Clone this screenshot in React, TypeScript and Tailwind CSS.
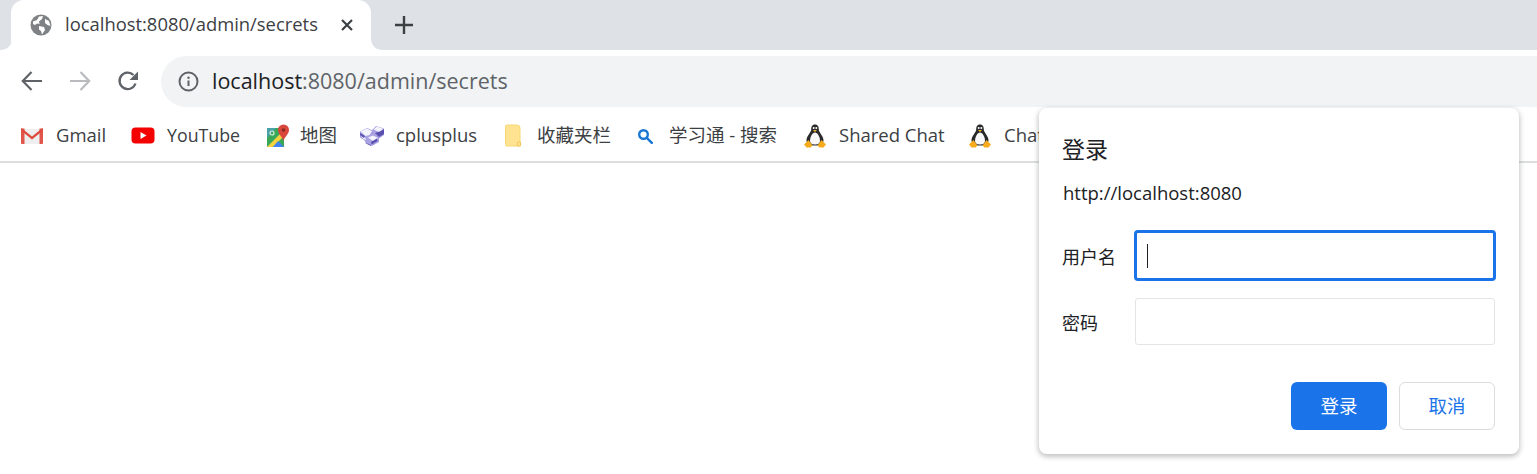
import React from "react";

const UI = "font-['Open_Sans','Noto_Sans_CJK_SC',sans-serif]";

function Flare({ side }: { side: "l" | "r" }) {
  return (
    <svg width="12" height="12" viewBox="0 0 12 12" className="shrink-0 self-end">
      {side === "l" ? <path d="M0 12C7 12 12 8 12 0V12Z" fill="#fff" /> : <path d="M12 12C5 12 0 8 0 0V12Z" fill="#fff" />}
    </svg>
  );
}

function Globe() {
  return (
    <svg width="22" height="22" viewBox="0 0 22 22" className="shrink-0">
      <circle cx="11" cy="11" r="10.5" fill="#7f8285" />
      <path d="M3 7.500 7 6l2-3.500 4-.5-1 3-3 2.500.5 2.500L7 9.500 5 11l-2-1ZM9 12l5 1 1 3-3 4.500-1-3.500-2-1.500ZM15 5l4 2 1.500 5-3-1-2.500-2Z" fill="#fff" />
    </svg>
  );
}

function Gmail() {
  return (
    <svg width="24" height="18" viewBox="0 0 24 18">
      <path d="M4 2h16v15H4Z" fill="#efefef" />
      <path d="M1 1.500h3.500V17H2a1 1 0 0 1-1-1ZM19.500 1.500H23V16a1 1 0 0 1-1 1h-2.500Z" fill="#e0564a" />
      <path d="M1.500 1 12 9.500 22.500 1 23 3.500 12 12.500 1 3.500Z" fill="#dd4b3f" />
    </svg>
  );
}

function YouTube() {
  return (
    <svg width="24" height="17" viewBox="0 0 24 17">
      <rect x="0.500" y="0.500" width="23" height="16" rx="4" fill="#f40000" />
      <path d="M9.500 5v7l6-3.500Z" fill="#fff" />
    </svg>
  );
}

function Maps() {
  return (
    <svg width="24" height="24" viewBox="0 0 24 24">
      <path d="M1 4h17v19H1Z" fill="#39a85a" />
      <path d="M1 4h9L1 14Z" fill="#5a9be8" opacity=".55" />
      <path d="M1 23 18 6v6L7 23Z" fill="#f5d33f" />
      <path d="M7 23l5-6 6 6Z" fill="#3f82f0" />
      <circle cx="6" cy="9" r="2" fill="none" stroke="#d8f0dd" strokeWidth="1.200" />
      <path d="M17.500 0.500a5.500 5.500 0 0 1 5.500 5.500c0 4-4 6-5.500 11-1.500-5-5.500-7-5.500-11a5.500 5.500 0 0 1 5.500-5.500Z" fill="#d9463b" />
      <circle cx="17.500" cy="6" r="1.800" fill="#8c2a23" />
    </svg>
  );
}

function CPlus() {
  return (
    <svg width="26" height="22" viewBox="0 0 26 22">
      <path d="M1 6.500 8 3l5 2 4-4 8 2.500V10l-5 3.500V17l-7 4-6-3-2-3-4-2.500Z" fill="#a8a2e2" />
      <path d="M1.500 6.500 8 3.500l5 2.500-2.500 4-4 1ZM14.500 4.500 18 1.500l6.500 2.500-4.500 3ZM9 12.500l5-2 5 2.500-5 3ZM2 11l4 1.500L7 15l-2.500-1Z" fill="#f4f4fc" />
      <path d="M6 17.500 12 20v1l-5-2.500ZM12 17l6-3.500.5 2.500-6 3.500ZM16 8l5-1.500 4-2.500V9l-5 3ZM1 8l5 3-1 2-4-3Z" fill="#5a50b0" />
    </svg>
  );
}

function Folder() {
  return (
    <svg width="19" height="24" viewBox="0 0 19 24">
      <path d="M1.500 2.500a1.500 1.500 0 0 1 1.500-1.500h10a3 3 0 0 1 3 3v18H3a1.500 1.500 0 0 1-1.500-1.500Z" fill="#ffe391" stroke="#f8d873" />
      <path d="M13.500 22v-4h3v4Z" fill="#ffe391" stroke="#f2c85a" />
    </svg>
  );
}

function Search() {
  return (
    <svg width="16" height="16" viewBox="0 0 16 16" fill="none" stroke="#1976d2" strokeWidth="2.400">
      <circle cx="6.500" cy="6.500" r="4.300" />
      <path d="m9.800 9.800 5 5" strokeLinecap="round" />
    </svg>
  );
}

function Tux() {
  return (
    <svg width="22" height="24" viewBox="0 0 22 24">
      <path d="M11 .5c3 0 3.800 2.500 3.800 5 0 3 4.700 6.500 4.700 11 0 3-3.500 5-8.500 5s-8.500-2-8.500-5c0-4.500 4.700-8 4.700-11 0-2.500.8-5 3.800-5Z" fill="#2a2a2a" />
      <path d="M11 8.500c2.500 0 5 4.500 5 8s-2.500 4-5 4-5-.5-5-4 2.500-8 5-8Z" fill="#f8f8f8" />
      <circle cx="9.700" cy="4" r="1" fill="#fff" />
      <circle cx="12.300" cy="4" r="1" fill="#fff" />
      <path d="M9 6h4l-2 2Z" fill="#f0b429" />
      <path d="M0 20.500 4.500 16 8.500 21.500 6.500 23.500H2.500ZM22 20.500 17.500 16 13.500 21.500 15.500 23.500H19.500Z" fill="#f5ab1c" />
    </svg>
  );
}

function Bookmark({ icon, label, iw, gap, w, size = "text-[18.5px]" }: { icon: React.ReactNode; label: string; iw: string; gap: string; w: string; size?: string }) {
  return (
    <div className={`flex items-center shrink-0 ${w}`}>
      <div className={`flex justify-center shrink-0 ${iw} ${gap}`}>{icon}</div>
      <span className={`${size} text-[#3c4043] whitespace-nowrap leading-none`}>{label}</span>
    </div>
  );
}

export default function App() {
  return (
    <div className={`relative w-[1537px] h-[474px] overflow-hidden bg-white ${UI}`}>
      {/* tab strip */}
      <div className="flex h-[50px] bg-[#dee1e6]">
        <Flare side="l" />
        <div className="flex items-center w-[360px] h-[50px] shrink-0 bg-white rounded-t-[13px] -ml-px pl-[19px]">
          <Globe />
          <span className="ml-[13px] mb-[2px] text-[18.4px] text-[#3c4043] whitespace-nowrap">localhost:8080/admin/secrets</span>
          <svg width="12" height="12" viewBox="0 0 12 12" className="ml-auto mr-[18px]" stroke="#3c4043" strokeWidth="2.200">
            <path d="m1 1 10 10M11 1 1 11" />
          </svg>
        </div>
        <Flare side="r" />
        <svg width="18" height="18" viewBox="0 0 18 18" className="ml-[12px] mt-[16px]" stroke="#3c4043" strokeWidth="2.400">
          <path d="M9 0v18M0 9h18" />
        </svg>
      </div>

      {/* toolbar */}
      <div className="flex items-center h-[57px] pt-[6px] pb-0">
        <div className="flex items-center w-[161px] shrink-0 h-full pb-[1px]">
          <svg width="22" height="20" viewBox="0 0 22 20" fill="none" stroke="#5f6368" strokeWidth="2.200" className="ml-[21px]">
            <path d="M21 10H2M10.500 1 1.800 10l8.700 9" />
          </svg>
          <svg width="22" height="20" viewBox="0 0 22 20" fill="none" stroke="#b9bbbe" strokeWidth="2.200" className="ml-[26px]">
            <path d="M1 10h19M11.500 1l8.700 9-8.700 9" />
          </svg>
          <svg width="22" height="22" viewBox="0 0 22 22" fill="none" className="ml-[26px]">
            <path d="M18.500 13.500A8.200 8.200 0 1 1 16.500 5" stroke="#5f6368" strokeWidth="2.300" />
            <path d="M21 1.500V10h-8.500Z" fill="#5f6368" />
          </svg>
        </div>
        <div className="flex items-center flex-1 h-[51px] bg-[#f1f3f4] rounded-l-[26px] pl-[17px] self-start">
          <svg width="21" height="21" viewBox="0 0 21 21" fill="none">
            <circle cx="10.500" cy="10.500" r="9" stroke="#5f6368" strokeWidth="2" />
            <path d="M10.500 9.500v5.500" stroke="#5f6368" strokeWidth="2" />
            <circle cx="10.500" cy="6.700" r="1.200" fill="#5f6368" />
          </svg>
          <span className="ml-[13px] text-[21.5px] text-[#5f6368] whitespace-nowrap">
            <span className="text-[#202124]">localhost</span>:8080/admin/secrets
          </span>
        </div>
      </div>

      {/* bookmarks */}
      <div className="flex items-center h-[56px] pl-[20px] pt-[3px] border-b-2 border-b-[#dcdddf]">
        <Bookmark icon={<Gmail />} label="Gmail" iw="w-[24px]" gap="mr-[12px]" w="w-[111px]" />
        <Bookmark icon={<YouTube />} label="YouTube" iw="w-[24px]" gap="mr-[12px]" w="w-[135px]" size="text-[17.8px]" />
        <Bookmark icon={<Maps />} label="地图" iw="w-[24px]" gap="mr-[10px]" w="w-[93px]" />
        <Bookmark icon={<CPlus />} label="cplusplus" iw="w-[26px]" gap="mr-[11px]" w="w-[145px]" />
        <Bookmark icon={<Folder />} label="收藏夹栏" iw="w-[19px]" gap="mr-[14px]" w="w-[133px]" />
        <Bookmark icon={<Search />} label="学习通 - 搜索" iw="w-[16px]" gap="mr-[16px]" w="w-[167px]" />
        <Bookmark icon={<Tux />} label="Shared Chat" iw="w-[22px]" gap="mr-[13px]" w="w-[165px]" />
        <Bookmark icon={<Tux />} label="Chat" iw="w-[22px]" gap="mr-[13px]" w="w-[80px]" />
      </div>

      {/* auth dialog */}
      <div className="absolute left-[1039px] top-[108px] w-[480px] h-[346px] bg-white rounded-[8px] shadow-[0_2px_5px_1px_rgba(60,64,67,0.3)] pl-[23px] pr-[24px] pt-[26px]">
        <div className="text-[23px] leading-[30px] text-[#202124]">登录</div>
        <div className="mt-[16px] ml-px text-[18.5px] leading-[25px] text-[#202124]">http://localhost:8080</div>
        <div className="flex items-center mt-[25px] h-[51px]">
          <span className="w-[72px] shrink-0 mt-[4px] text-[18px] text-[#202124]">用户名</span>
          <div className="flex items-center w-[362px] shrink-0 h-[51px] border-[3px] border-[#1a73e8] rounded-[4px] pl-[10px]">
            <div className="w-px h-[24px] bg-[#202124]" />
          </div>
        </div>
        <div className="flex items-center mt-[17px] h-[47px]">
          <span className="w-[73px] shrink-0 mt-[4px] text-[18px] text-[#202124]">密码</span>
          <div className="w-[360px] shrink-0 h-[47px] border border-[#e4e5e7] rounded-[3px]" />
        </div>
        <div className="flex justify-end gap-[12px] mt-[37px]">
          <div className="flex items-center justify-center w-[96px] h-[48px] bg-[#1a73e8] rounded-[6px] text-[18.5px] text-white">登录</div>
          <div className="flex items-center justify-center w-[96px] h-[48px] border border-[#dadce0] rounded-[6px] text-[18.5px] text-[#1a73e8]">取消</div>
        </div>
      </div>
    </div>
  );
}
